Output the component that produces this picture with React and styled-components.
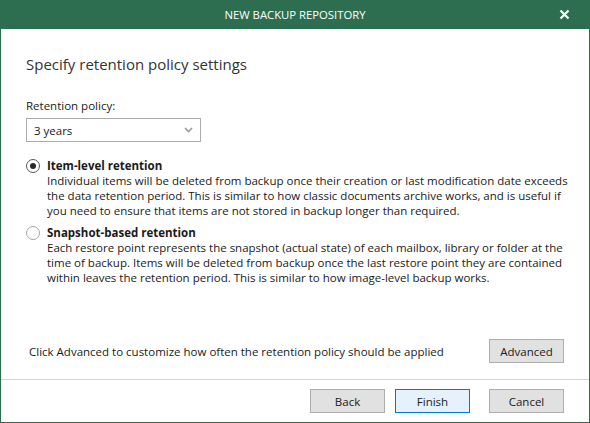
import React, { useState } from "react";
import styled, { createGlobalStyle } from "styled-components";

const GlobalStyle = createGlobalStyle`
  html, body {
    margin: 0;
    padding: 0;
    background: #ffffff;
  }
  * {
    box-sizing: border-box;
  }
`;

const Window = styled.div`
  width: 590px;
  height: 423px;
  display: flex;
  flex-direction: column;
  border: 1px solid #2d6e50;
  border-top: none;
  background: #ffffff;
  font-family: "Open Sans", "Noto Sans", sans-serif;
  color: #1a1a1a;
`;

const TitleBar = styled.div`
  height: 29px;
  margin: 0 -1px;
  background: #2d6e50;
  color: #ffffff;
  display: grid;
  grid-template-columns: 1fr auto 1fr;
  align-items: center;
  font-size: 11.3px;
`;

const TitleText = styled.div`
  grid-column: 2;
`;

const CloseButton = styled.button`
  grid-column: 3;
  justify-self: end;
  margin-right: 19px;
  width: 14px;
  height: 14px;
  padding: 0;
  border: none;
  background: transparent;
  display: flex;
  align-items: center;
  justify-content: center;
  cursor: pointer;
`;

const Body = styled.div`
  flex: 1;
  padding: 25px 25px 0 25px;
  display: flex;
  flex-direction: column;
`;

const Heading = styled.h1`
  margin: 0;
  font-size: 15px;
  font-weight: 400;
  line-height: 20px;
  color: #333333;
`;

const FieldLabel = styled.div`
  margin-top: 24px;
  font-size: 11.5px;
  line-height: 16px;
`;

const Select = styled.div`
  margin-top: 4px;
  width: 175px;
  height: 24px;
  border: 1px solid #ababab;
  display: flex;
  align-items: center;
  justify-content: space-between;
  padding: 0 7px 0 7px;
  font-size: 11.5px;
`;

const Options = styled.div`
  margin-top: 16px;
  margin-right: -12px;
  display: flex;
  flex-direction: column;
  gap: 7px;
`;

const Option = styled.label`
  display: grid;
  grid-template-columns: 21px 1fr;
  font-size: 11.5px;
  line-height: 15px;
  cursor: pointer;
`;

const Radio = styled.span`
  width: 14px;
  height: 14px;
  margin-top: 1px;
  border-radius: 50%;
  border: 1px solid ${(p) => (p.checked ? "#5a5a5a" : "#a8a8a8")};
  background: #ffffff;
  display: flex;
  align-items: center;
  justify-content: center;

  &::after {
    content: "";
    width: 6px;
    height: 6px;
    border-radius: 50%;
    background: ${(p) => (p.checked ? "#2a2a2a" : "transparent")};
  }
`;

const OptionTitle = styled.div`
  font-weight: 700;
`;

const OptionText = styled.div`
  color: #1a1a1a;
`;

const AdvancedRow = styled.div`
  margin-top: auto;
  margin-bottom: 16px;
  padding-left: 3px;
  display: flex;
  align-items: center;
  justify-content: space-between;
  font-size: 11.5px;
`;

const Footer = styled.div`
  border-top: 1px solid #d4d4d4;
  height: 43px;
  padding: 9px 25px 0 0;
  display: flex;
  justify-content: flex-end;
  gap: 10px;
`;

const Button = styled.button`
  width: 75px;
  height: 24px;
  margin-left: ${(p) => p.$gapLeft || 0}px;
  border: 1px solid ${(p) => (p.$primary ? "#0078d7" : "#adadad")};
  background: ${(p) => (p.$primary ? "#e5f1fb" : "#e1e1e1")};
  font-family: "Open Sans", "Noto Sans", sans-serif;
  font-size: 11.5px;
  color: #1a1a1a;
  padding: 0;
  cursor: pointer;
`;

const options = [
  {
    id: "item",
    title: "Item-level retention",
    text:
      "Individual items will be deleted from backup once their creation or last modification date exceeds the data retention period. This is similar to how classic documents archive works, and is useful if you need to ensure that items are not stored in backup longer than required.",
  },
  {
    id: "snapshot",
    title: "Snapshot-based retention",
    text:
      "Each restore point represents the snapshot (actual state) of each mailbox, library or folder at the time of backup. Items will be deleted from backup once the last restore point they are contained within leaves the retention period. This is similar to how image-level backup works.",
  },
];

export default function App() {
  const [mode, setMode] = useState("item");

  return (
    <>
      <GlobalStyle />
      <Window>
        <TitleBar>
          <TitleText>NEW BACKUP REPOSITORY</TitleText>
          <CloseButton aria-label="Close">
            <svg width="11" height="11" viewBox="0 0 11 11">
              <path d="M1.5 1.5 L9.5 9.5 M9.5 1.5 L1.5 9.5" stroke="#ffffff" strokeWidth="2.2" />
            </svg>
          </CloseButton>
        </TitleBar>
        <Body>
          <Heading>Specify retention policy settings</Heading>
          <FieldLabel>Retention policy:</FieldLabel>
          <Select>
            <span>3 years</span>
            <svg width="9" height="6" viewBox="0 0 9 6">
              <path d="M1 1 L4.5 4.5 L8 1" fill="none" stroke="#9a9a9a" strokeWidth="1.6" />
            </svg>
          </Select>
          <Options>
            {options.map((o) => (
              <Option key={o.id} onClick={() => setMode(o.id)}>
                <Radio checked={mode === o.id} />
                <div>
                  <OptionTitle>{o.title}</OptionTitle>
                  <OptionText>{o.text}</OptionText>
                </div>
              </Option>
            ))}
          </Options>
          <AdvancedRow>
            <span>Click Advanced to customize how often the retention policy should be applied</span>
            <Button>Advanced</Button>
          </AdvancedRow>
        </Body>
        <Footer>
          <Button>Back</Button>
          <Button $primary>Finish</Button>
          <Button $gapLeft={9}>Cancel</Button>
        </Footer>
      </Window>
    </>
  );
}
